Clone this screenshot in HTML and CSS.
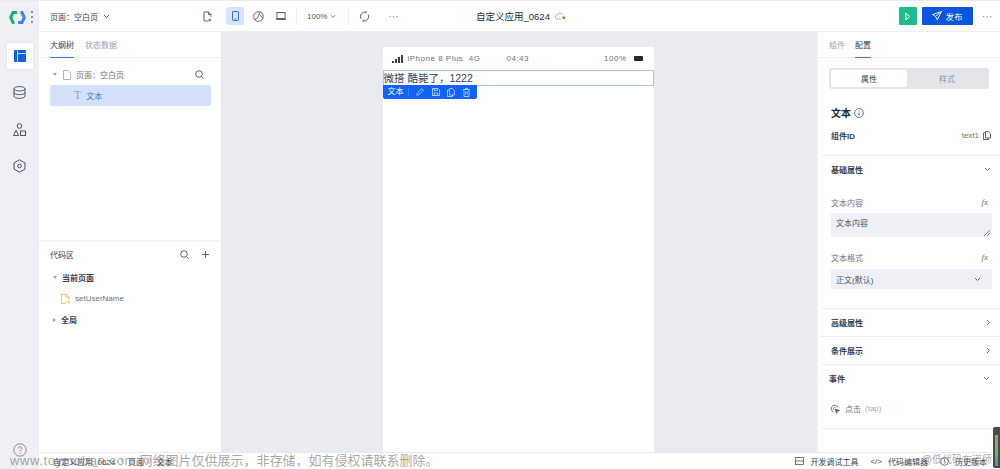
FILE: index.html
```html
<!DOCTYPE html>
<html lang="zh">
<head>
    <meta charset="UTF-8">
    <title>自定义应用_0624</title>
    <link rel="stylesheet" href="styles.css">
</head>
<body>
<div class="app">

    <nav class="rail">
        <div class="logo">
            <svg width="17" height="13" viewBox="0 0 17 13" fill="none" stroke-width="3"><path d="M8 1.500H4L1.700 6.500 4 11.500h1.500" stroke="#17b26a"/><path d="M9 11.500h4l2.300-5L13 1.500h-1.500" stroke="#3b82f6"/></svg>
            <span class="logo-dots"><i></i><i></i><i></i></span>
        </div>
        <a class="rail-btn active">
            <svg width="12" height="12" viewBox="0 0 12 12"><rect width="12" height="12" rx="1" fill="#0f5fe0"/><path d="M3.500 0v12M3.500 3.500H12" stroke="#fff" stroke-width=".8"/></svg>
        </a>
        <a class="rail-btn">
            <svg width="13" height="13" viewBox="0 0 13 13" fill="none" stroke="#4b5563"><ellipse cx="6.500" cy="2.800" rx="5.500" ry="2.200"/><path d="M1 2.800v7.400c0 1.200 2.500 2.200 5.500 2.200s5.500-1 5.500-2.200V2.800M1 6.500c0 1.200 2.500 2.200 5.500 2.200S12 7.700 12 6.500"/></svg>
        </a>
        <a class="rail-btn">
            <svg width="13" height="13" viewBox="0 0 13 13" fill="none" stroke="#4b5563"><circle cx="6.500" cy="3" r="2.300"/><path d="M3 7.500l2.700 5H.4z"/><rect x="7.500" y="8" width="5" height="4.500"/></svg>
        </a>
        <a class="rail-btn">
            <svg width="13" height="14" viewBox="0 0 13 14" fill="none" stroke="#4b5563"><path d="M6.500.8l5.500 3.100v6.200l-5.500 3.100L1 10.100V3.900z"/><circle cx="6.500" cy="7" r="1.800"/></svg>
        </a>
        <div class="rail-help">
            <svg width="14" height="14" viewBox="0 0 14 14" fill="none" stroke="#6b7280" stroke-width=".8"><circle cx="7" cy="7" r="6.200"/><path d="M5.200 5.500c0-2.300 3.600-2.300 3.600 0 0 1.400-1.800 1.400-1.800 3M7 9.800v1"/></svg>
        </div>
    </nav>

    <div class="main">
        <header class="topbar">
            <div class="page-select">
                <span>页面：空白页</span>
                <svg class="chevron" width="7" height="5" viewBox="0 0 7 5"><path d="M1 1l2.500 2.500L6 1"/></svg>
                <svg class="page-add" width="9" height="11" viewBox="0 0 9 11" fill="none" stroke="#4b5563" stroke-width=".9"><path d="M5.500 10H1V1h4.500L8 3.500V6M5.500 1v2.500H8M6.800 7.500v3M5.300 9h3"/></svg>
            </div>
            <div class="tools">
                <a class="tool tool-on">
                    <svg width="7" height="10" viewBox="0 0 7 10" fill="none" stroke="#2f6fdf"><rect x=".5" y=".5" width="6" height="9" rx=".7"/><path d="M2.500 8h2"/></svg>
                </a>
                <a class="tool">
                    <svg width="11" height="11" viewBox="0 0 11 11" fill="none" stroke="#4b5563" stroke-width=".9"><circle cx="5.500" cy="5.500" r="4.800"/><path d="M7.500 1L4 7.500 1.500 8.500M7 3.500L9.500 7"/></svg>
                </a>
                <a class="tool">
                    <svg width="10" height="8" viewBox="0 0 10 8" fill="none" stroke="#4b5563" stroke-width=".9"><rect x=".9" y=".5" width="8.200" height="6"/><path d="M0 7.500h10"/></svg>
                </a>
                <span class="tool-sep"></span>
                <span class="zoom-val">100%</span>
                <svg class="chevron" width="7" height="5" viewBox="0 0 7 5"><path d="M1 1l2.500 2.500L6 1"/></svg>
                <span class="tool-sep sep-2"></span>
                <a class="tool">
                    <svg width="11" height="11" viewBox="0 0 11 11" fill="none" stroke="#4b5563" stroke-width=".9"><path d="M1.800 7.500A4.500 4.500 0 0 1 7 1.200M9.200 3.500A4.500 4.500 0 0 1 4 9.800M7 .2v2M4 8.800v2"/></svg>
                </a>
                <span class="tool-more">···</span>
            </div>
            <div class="app-title">
                <span>自定义应用_0624</span>
                <svg width="11" height="8" viewBox="0 0 11 8" fill="none" stroke="#9ca3af" stroke-width=".8"><path d="M6 7H2.500a2 2 0 0 1-.3-4A3 3 0 0 1 7.800 3"/><circle cx="8.800" cy="5.800" r="1.500" fill="#f4691e" stroke="none"/></svg>
            </div>
            <div class="actions">
                <a class="btn-run">
                    <svg width="6" height="9" viewBox="0 0 6 9" fill="none" stroke="#fff"><path d="M.8 1v7l4-3.500z"/></svg>
                </a>
                <a class="btn-publish">
                    <svg width="10" height="10" viewBox="0 0 10 10" fill="none" stroke="#fff" stroke-width=".9"><path d="M9.500.5L.5 3.500l3 1.800 1.800 3.500zM3.500 5.300L9.500.5"/></svg>
                    发布
                </a>
                <span class="tool-more">···</span>
            </div>
        </header>

        <div class="workspace">
            <aside class="left">
                <div class="tabs">
                    <span class="tab tab-on">大纲树</span>
                    <span class="tab">状态数据</span>
                </div>
                <div class="outline">
                    <div class="tree-row">
                        <span class="caret"></span>
                        <svg width="8" height="10" viewBox="0 0 8 10" fill="none" stroke="#9ca3af" stroke-width=".8"><path d="M.5.5h4.500l2.500 2.500v6.500h-7z"/></svg>
                        <span class="tree-label">页面：空白页</span>
                        <svg class="search-icon" width="9" height="9" viewBox="0 0 9 9" fill="none" stroke="#4b5563" stroke-width=".9"><circle cx="4" cy="4" r="3.300"/><path d="M6.500 6.500L8.600 8.600"/></svg>
                    </div>
                    <div class="tree-sel">
                        <span class="t-glyph">T</span>
                        <span>文本</span>
                    </div>
                </div>
                <div class="code-area">
                    <div class="code-head">
                        <span>代码区</span>
                        <svg class="search-icon" width="9" height="9" viewBox="0 0 9 9" fill="none" stroke="#4b5563" stroke-width=".9"><circle cx="4" cy="4" r="3.300"/><path d="M6.500 6.500L8.600 8.600"/></svg>
                        <svg class="plus-icon" width="7" height="7" viewBox="0 0 7 7" stroke="#4b5563" stroke-width=".9"><path d="M3.500 0v7M0 3.500h7"/></svg>
                    </div>
                    <div class="code-group"><span class="caret"></span>当前页面</div>
                    <div class="code-file">
                        <svg width="9" height="10" viewBox="0 0 9 10" fill="none" stroke="#f6c343" stroke-width=".9"><path d="M5 9.500H.5v-9H5L8 3v2.500M5 .5V3h3M6 7v2M8.500 7H7.500v1h1v1h-1"/></svg>
                        <span>setUserName</span>
                    </div>
                    <div class="code-group"><span class="caret caret-right"></span>全局</div>
                </div>
            </aside>

            <section class="canvas">
                <div class="phone">
                    <div class="phone-status">
                        <span class="signal"><i></i><i></i><i></i><i></i></span>
                        <span class="carrier">iPhone 8 Plus&nbsp; 4G</span>
                        <span class="clock">04:43</span>
                        <span class="battery-text">100%</span>
                        <span class="battery"></span>
                    </div>
                    <div class="selected-text">微搭 酷毙了，1222</div>
                    <div class="sel-toolbar">
                        <span class="sel-name">文本</span>
                        <svg width="8" height="8" viewBox="0 0 8 8" fill="none" stroke="#cfe0ff" stroke-width=".8"><path d="M.8 7.200l.4-2L5.800.6l1.600 1.600-4.600 4.600z"/></svg>
                        <svg width="8" height="8" viewBox="0 0 8 8" fill="none" stroke="#cfe0ff" stroke-width=".8"><path d="M.5.500h5.500l1.500 1.500v5.500h-7zM2.200 7.500V5h3.600v2.500M2.200.5v2h3v-2"/></svg>
                        <svg width="8" height="9" viewBox="0 0 8 9" fill="none" stroke="#cfe0ff" stroke-width=".8"><path d="M2.500.5h2.800l2.200 2.200v4.300h-5zM2.500 2H.5v6.500h5V7"/></svg>
                        <svg width="7" height="9" viewBox="0 0 7 9" fill="none" stroke="#cfe0ff" stroke-width=".8"><path d="M0 1.500h7M2.500 1.500V.5h2v1M1 1.500v7h5v-7M2.700 3.500v3M4.300 3.500v3"/></svg>
                    </div>
                </div>
            </section>

            <aside class="right">
                <div class="tabs tabs-right">
                    <span class="tab">组件</span>
                    <span class="tab tab-on">配置</span>
                </div>
                <div class="segment">
                    <span class="seg seg-on">属性</span>
                    <span class="seg">样式</span>
                </div>
                <div class="comp-block">
                    <div class="comp-title">
                        文本
                        <svg width="10" height="10" viewBox="0 0 10 10" fill="none" stroke="#4b5563" stroke-width=".8"><circle cx="5" cy="5" r="4.400"/><path d="M5 4.300V7.500M5 2.500v.9"/></svg>
                    </div>
                    <div class="comp-id">
                        <b>组件ID</b>
                        <span class="comp-id-val">text1</span>
                        <svg width="8" height="9" viewBox="0 0 8 9" fill="none" stroke="#4b5563" stroke-width=".9"><path d="M2.500.5h2.800l2.200 2.200v4.300h-5zM2.500 2H.5v6.500h5V7"/></svg>
                    </div>
                </div>
                <div class="prop-group prop-basic">
                    <div class="prop-head">
                        <b>基础属性</b>
                        <svg class="chevron" width="7" height="5" viewBox="0 0 7 5"><path d="M1 1l2.500 2.500L6 1"/></svg>
                    </div>
                    <div class="field-label"><span>文本内容</span><i class="fx">fx</i></div>
                    <div class="text-box">文本内容
                        <svg class="resize" width="6" height="6" viewBox="0 0 6 6" stroke="#4b5563" stroke-width=".7"><path d="M0 6l6-6M3 6l3-3"/></svg>
                    </div>
                    <div class="field-label label-2"><span>文本格式</span><i class="fx">fx</i></div>
                    <div class="select-box">
                        <span>正文(默认)</span>
                        <svg class="chevron" width="7" height="5" viewBox="0 0 7 5"><path d="M1 1l2.500 2.500L6 1"/></svg>
                    </div>
                </div>
                <div class="prop-row">
                    <b>高级属性</b>
                    <svg class="chevron" width="5" height="7" viewBox="0 0 5 7"><path d="M1 1l2.500 2.500L1 6"/></svg>
                </div>
                <div class="prop-row">
                    <b>条件展示</b>
                    <svg class="chevron" width="5" height="7" viewBox="0 0 5 7"><path d="M1 1l2.500 2.500L1 6"/></svg>
                </div>
                <div class="events">
                    <div class="events-head">
                        <b>事件</b>
                        <svg class="chevron" width="7" height="5" viewBox="0 0 7 5"><path d="M1 1l2.500 2.500L6 1"/></svg>
                    </div>
                    <div class="event-row">
                        <svg width="10" height="10" viewBox="0 0 10 10" fill="none" stroke="#6b7280" stroke-width="1"><path d="M3.500 8A3.500 3.500 0 1 1 8 3.500M3.500 5.500A1.500 1.500 0 0 1 5.500 3.500"/><path d="M5 5l4.500 1.500-2 .8-.8 2z" fill="#6b7280"/></svg>
                        <span>点击</span>
                        <span class="event-tap">(tap)</span>
                    </div>
                </div>
            </aside>
        </div>

        <footer class="statusbar">
            <div class="crumbs">
                <span>自定义应用_0624</span><em>›</em><span>页面</span><em>›</em><span>文本</span>
            </div>
            <div class="status-tools">
                <span class="status-item">
                    <svg width="9" height="8" viewBox="0 0 9 8" fill="none" stroke="#4b5563" stroke-width=".8"><rect x=".5" y=".5" width="8" height="7"/><path d="M.5 4h8"/></svg>
                    开发调试工具
                </span>
                <span class="status-item"><span class="code-mark">&lt;/&gt;</span> 代码编辑器</span>
                <span class="status-item">
                    <svg width="9" height="9" viewBox="0 0 9 9" fill="none" stroke="#4b5563" stroke-width=".8"><circle cx="4.500" cy="4.500" r="3.800"/><path d="M4.500 2.500v2.200l1.500 1"/></svg>
                    历史版本
                </span>
            </div>
        </footer>
    </div>

    <div class="mark-site"><span class="mark-url">www.toymoban.com</span> 网络图片仅供展示，非存储，如有侵权请联系删除。</div>
    <div class="mark-author">@低代码布道师</div>
    <div class="side-widget"></div>
</div>
</body>
</html>
```

FILE: styles.css
```css
*{
    box-sizing: border-box;
    margin: 0;
    padding: 0;
}
html, body{
    height: 100%;
    overflow: hidden;
}
body{
    font-family: "Liberation Sans", "Noto Sans CJK SC", sans-serif;
    font-size: 8px;
    color: #4b5563;
    background: #fff;
}
svg{
    flex: none;
    display: block;
}
.chevron{
    fill: none;
    stroke: #4b5563;
    stroke-width: .9;
}

.app{
    position: relative;
    display: flex;
    width: 1000px;
    height: 469px;
    overflow: hidden;
}

/* left rail */
.rail{
    width: 39px;
    flex: none;
    display: flex;
    flex-direction: column;
    align-items: center;
    background: #eef0f5;
    border-top: 1px solid #e8eaee;
}
.logo{
    display: flex;
    align-items: center;
    gap: 5px;
    height: 31px;
    margin-left: 2px;
    padding-top: 1px;
}
.logo-dots{
    display: flex;
    flex-direction: column;
    gap: 3px;
}
.logo-dots i{
    width: 2px;
    height: 2px;
    border-radius: 50%;
    background: #6b7280;
}
.rail-btn{
    width: 26px;
    height: 26px;
    margin-bottom: 10.5px;
    display: flex;
    align-items: center;
    justify-content: center;
    border-radius: 2px;
}
.rail-btn.active{
    margin-top: 11px;
    background: #fff;
    box-shadow: 0 0 3px rgba(0, 0, 0, .08);
}
.rail-help{
    margin-top: auto;
    margin-bottom: 12px;
}

.main{
    flex: 1;
    min-width: 0;
    display: flex;
    flex-direction: column;
}

/* top bar */
.topbar{
    height: 32px;
    flex: none;
    display: flex;
    align-items: center;
    border-top: 1px solid #e8eaee;
    border-bottom: 1px solid #eceef2;
    background: #fff;
}
.page-select{
    width: 182px;
    flex: none;
    display: flex;
    align-items: center;
    padding-left: 11px;
    color: #374151;
}
.page-select .chevron{
    margin-left: 5px;
}
.page-add{
    margin-left: auto;
    margin-right: 9px;
}
.tools{
    width: 255px;
    flex: none;
    display: flex;
    align-items: center;
    padding-left: 5px;
}
.tool{
    width: 18px;
    height: 18px;
    margin-right: 5px;
    display: flex;
    align-items: center;
    justify-content: center;
    border-radius: 2px;
}
.tool-on{
    background: #d7e4fb;
}
.tool-sep{
    width: 1px;
    height: 17px;
    margin: 0 10px 0 1px;
    background: #eceef2;
}
.sep-2{
    margin: 0 6px 0 12px;
}
.zoom-val{
    margin-right: 3px;
}
.tools .chevron{
    width: 6px;
}
.tool-more{
    margin-left: 10px;
    font-size: 9px;
    color: #6b7280;
    letter-spacing: .5px;
}
.app-title{
    width: 200px;
    flex: none;
    display: flex;
    align-items: center;
    gap: 5px;
    font-size: 9.5px;
    color: #1f2937;
}
.actions{
    margin-left: auto;
    display: flex;
    align-items: center;
}
.btn-run{
    width: 18px;
    height: 18px;
    display: flex;
    align-items: center;
    justify-content: center;
    border-radius: 1px;
    background: #1cbd8d;
}
.btn-publish{
    width: 51px;
    height: 18px;
    margin-left: 5px;
    display: flex;
    align-items: center;
    justify-content: center;
    gap: 3px;
    border-radius: 1px;
    background: #0a56dc;
    color: #fff;
    font-size: 8.5px;
}
.actions .tool-more{
    width: 27px;
    margin-left: 0;
    padding-left: 9px;
}

.workspace{
    flex: 1;
    min-height: 0;
    display: flex;
}

/* left panel */
.left{
    width: 182px;
    flex: none;
    display: flex;
    flex-direction: column;
    background: #fff;
}
.tabs{
    height: 26px;
    flex: none;
    display: flex;
    gap: 11px;
    padding-left: 11px;
    border-bottom: 1px solid #eceef2;
}
.tab{
    height: 26px;
    padding-top: 7px;
    color: #9aa3b2;
}
.tab-on{
    color: #374151;
    border-bottom: 1px solid #3b78e7;
}
.outline{
    height: 184px;
    flex: none;
    padding: 6px 10px 0 11px;
    border-bottom: 2px solid #f3f4f6;
}
.tree-row{
    height: 21px;
    display: flex;
    align-items: center;
    gap: 6px;
    padding-left: 3px;
}
.caret{
    width: 0;
    height: 0;
    flex: none;
    border-left: 2.500px solid transparent;
    border-right: 2.500px solid transparent;
    border-top: 3px solid #9ca3af;
}
.caret-right{
    border-top: 2.500px solid transparent;
    border-bottom: 2.500px solid transparent;
    border-left: 3px solid #9ca3af;
    border-right: 0;
}
.tree-label{
    margin-left: -1px;
    color: #6b7280;
}
.search-icon{
    margin-left: auto;
}
.tree-row .search-icon{
    margin-right: 7px;
}
.tree-sel{
    height: 21px;
    display: flex;
    align-items: center;
    gap: 5px;
    padding-left: 24px;
    border-radius: 2px;
    background: #d3e2fa;
    color: #3b78e7;
}
.t-glyph{
    font-family: "Liberation Serif", serif;
    font-size: 12px;
    color: #9aa3b2;
}
.code-area{
    padding: 0 11px;
}
.code-head{
    height: 25px;
    display: flex;
    align-items: center;
    color: #374151;
}
.code-head .plus-icon{
    margin-left: 13px;
    margin-right: 1px;
}
.code-group{
    height: 21px;
    display: flex;
    align-items: center;
    gap: 5px;
    padding-left: 3px;
    font-weight: bold;
    color: #374151;
}
.code-file{
    height: 21px;
    display: flex;
    align-items: center;
    gap: 5px;
    padding-left: 11px;
    color: #6b7280;
}

/* canvas */
.canvas{
    flex: 1;
    min-width: 0;
    display: flex;
    justify-content: center;
    padding-top: 15px;
    padding-right: 1px;
    background: #e9ebf0;
}
.phone{
    position: relative;
    width: 271px;
    background: #fff;
}
.phone-status{
    height: 23px;
    display: flex;
    align-items: center;
    padding: 0 11px 0 9px;
    color: #6b7280;
    letter-spacing: .5px;
}
.signal{
    display: flex;
    align-items: flex-end;
    gap: 1px;
    height: 8px;
    margin-right: 5px;
}
.signal i{
    width: 2px;
    background: #374151;
}
.signal i:nth-child(1){ height: 2px; }
.signal i:nth-child(2){ height: 4px; }
.signal i:nth-child(3){ height: 6px; }
.signal i:nth-child(4){ height: 8px; }
.clock{
    margin-left: 26px;
}
.battery-text{
    margin-left: auto;
    margin-right: 7px;
}
.battery{
    width: 9px;
    height: 5px;
    border-radius: 1px;
    background: #1f2937;
}
.selected-text{
    height: 16px;
    line-height: 14px;
    font-size: 10.5px;
    color: #374151;
    border: 1px solid #a9c6f5;
    white-space: nowrap;
}
.sel-toolbar{
    position: absolute;
    top: 38px;
    left: 0;
    width: 94px;
    height: 14px;
    display: flex;
    align-items: center;
    gap: 7.500px;
    padding-left: 5px;
    border-radius: 0 0 2px 2px;
    background: #0f62fe;
    color: #fff;
}
.sel-name{
    padding-right: 4px;
    border-right: 1px solid #3d80fe;
    line-height: 8px;
}

/* right panel */
.right{
    width: 184px;
    flex: none;
    padding-left: 2px;
    background: #fff;
    border-left: 2px solid #eff0f3;
    display: flex;
    flex-direction: column;
}
.tabs-right{
    padding-left: 11px;
    gap: 10px;
    margin-left: -2px;
}
.segment{
    width: 160px;
    height: 21px;
    margin: 10px 0 0 9px;
    flex: none;
    display: flex;
    padding: 2px;
    border-radius: 3px;
    background: #e2e5ea;
}
.seg{
    flex: 1;
    display: flex;
    align-items: center;
    justify-content: center;
    color: #8a93a2;
}
.seg-on{
    flex: none;
    width: 76px;
    border-radius: 2px;
    background: #fff;
    color: #374151;
}
.comp-block{
    height: 67px;
    flex: none;
    padding: 16px 9px 0 11px;
    border-bottom: 1px solid #eceef2;
}
.comp-title{
    display: flex;
    align-items: center;
    gap: 3px;
    font-size: 10px;
    font-weight: bold;
    color: #1f2937;
}
.comp-id{
    display: flex;
    align-items: center;
    margin-top: 10px;
}
.comp-id b{
    color: #374151;
}
.comp-id-val{
    margin-left: auto;
    margin-right: 4px;
    color: #6b7280;
}
.prop-basic{
    height: 153px;
    flex: none;
    padding: 0 8px 0 11px;
    border-bottom: 1px solid #eceef2;
}
.prop-head{
    height: 26px;
    display: flex;
    align-items: center;
    justify-content: space-between;
    color: #374151;
}
.prop-head .chevron{
    margin-right: 1px;
}
.field-label{
    height: 14px;
    margin-top: 13px;
    display: flex;
    align-items: center;
    justify-content: space-between;
    color: #6b7280;
}
.label-2{
    margin-top: 13px;
}
.fx{
    font-family: "Liberation Serif", serif;
    font-size: 9px;
    padding-right: 4px;
}
.text-box{
    position: relative;
    height: 24px;
    margin-top: 4px;
    padding: 4px 5px;
    background: #eef0f5;
}
.resize{
    position: absolute;
    right: 2px;
    bottom: 1px;
}
.select-box{
    height: 20px;
    margin-top: 5px;
    display: flex;
    align-items: center;
    justify-content: space-between;
    padding: 0 11px 0 5px;
    background: #eef0f5;
}
.prop-row{
    height: 28px;
    flex: none;
    display: flex;
    align-items: center;
    justify-content: space-between;
    padding: 0 9px 0 11px;
    border-bottom: 1px solid #eceef2;
    color: #374151;
}
.events{
    height: 64px;
    flex: none;
    padding: 0 10px 0 9px;
    border-bottom: 1px solid #eceef2;
}
.events-head{
    height: 27px;
    display: flex;
    align-items: center;
    justify-content: space-between;
    color: #374151;
}
.event-row{
    display: flex;
    align-items: center;
    gap: 4px;
    margin-top: 11px;
    padding-left: 1px;
    color: #6b7280;
}
.event-row svg{
    margin-right: 1px;
}
.event-tap{
    color: #a5adc0;
}

/* status bar */
.statusbar{
    height: 17px;
    flex: none;
    display: flex;
    align-items: center;
    justify-content: space-between;
    padding: 0 13px 0 14px;
    border-top: 1px solid #e8eaee;
    background: #fff;
    color: #374151;
}
.crumbs{
    display: flex;
    gap: 5px;
}
.crumbs em{
    font-style: normal;
    color: #9ca3af;
}
.status-tools{
    display: flex;
    gap: 12px;
}
.status-item{
    display: flex;
    align-items: center;
    gap: 6px;
}

/* overlays on top of the screenshot */
.mark-site{
    position: absolute;
    left: 10px;
    bottom: 0;
    font-size: 13px;
    line-height: 17px;
    color: rgba(110, 110, 110, .62);
    white-space: nowrap;
}
.mark-url{
    letter-spacing: .6px;
}
.mark-author{
    position: absolute;
    right: 8px;
    bottom: 2px;
    font-size: 10px;
    line-height: 14px;
    color: rgba(110, 110, 110, .6);
    white-space: nowrap;
}
.side-widget{
    position: absolute;
    right: 0;
    bottom: 1px;
    width: 7px;
    height: 41px;
    border: 2px solid #444b55;
    border-top-width: 8px;
    border-radius: 2px 0 0 2px;
    background: linear-gradient(to bottom, #b79a52 20%, #7fae6a 60%, #4f9d8f 90%);
}
```
